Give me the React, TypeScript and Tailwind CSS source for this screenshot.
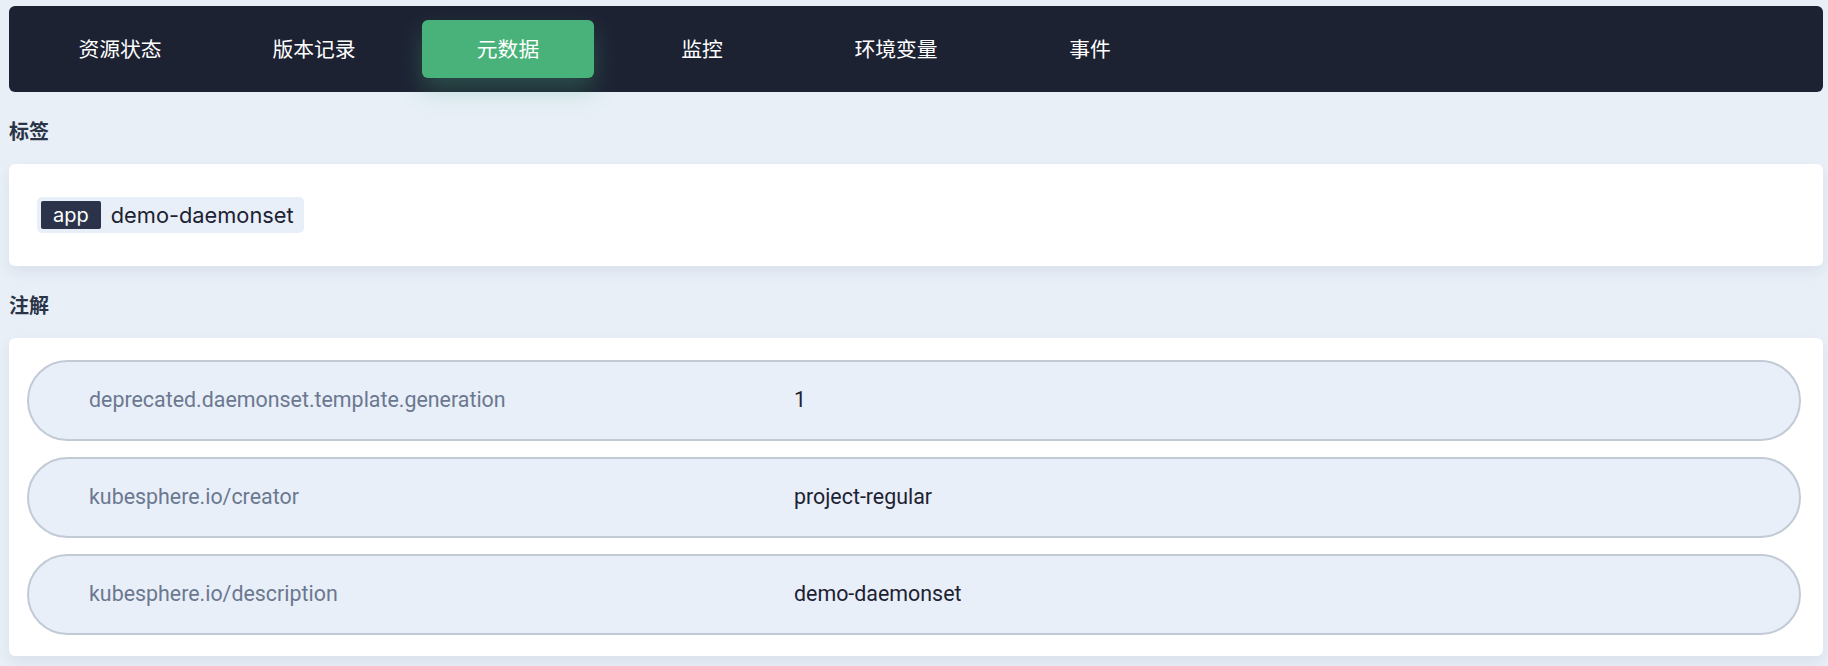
const tabs = ["资源状态", "版本记录", "元数据", "监控", "环境变量", "事件"];

const labels = [{ key: "app", value: "demo-daemonset" }];

const annotations = [
  { key: "deprecated.daemonset.template.generation", value: "1" },
  { key: "kubesphere.io/creator", value: "project-regular" },
  { key: "kubesphere.io/description", value: "demo-daemonset" },
];

const cjk = "font-['Noto_Sans_CJK_SC',sans-serif]";

function SectionTitle({ children }: { children: string }) {
  return (
    <h2
      className={`${cjk} pb-[19px] pt-[25px] text-[20px] font-semibold leading-[28px] text-[#2a3446]`}
    >
      {children}
    </h2>
  );
}

export default function App() {
  return (
    <div className="min-h-[666px] bg-[#e8eff7] pb-[7px] pl-[9px] pr-[5px] pt-[6px]">
      <nav className="flex h-[86px] items-center gap-[22px] rounded-[6px] bg-[#1d2233] pl-[25px]">
        {tabs.map((tab) => {
          const active = tab === "元数据";
          return (
            <button
              key={tab}
              className={`${cjk} flex h-[58px] w-[172px] items-center justify-center rounded-[6px] text-[20.8px] text-white ${
                active ? "bg-[#48b27a] shadow-[0_12px_24px_rgba(72,178,122,0.3)]" : ""
              }`}
            >
              {tab}
            </button>
          );
        })}
      </nav>

      <SectionTitle>标签</SectionTitle>
      <section className="flex h-[102px] items-center rounded-[6px] bg-white pl-[28px] shadow-[0_6px_14px_rgba(30,40,70,0.07)]">
        {labels.map((l) => (
          <div
            key={l.key}
            className="flex h-[36px] items-center gap-[10px] rounded-[5px] bg-[#e8eff8] p-[4px] pr-[10px] font-['Inter',sans-serif] text-[20px]"
          >
            <span className="flex h-[28px] items-center rounded-[2px] bg-[#2a3349] px-[12px] text-white">
              {l.key}
            </span>
            <span className="text-[21.8px] text-[#1d2233]">{l.value}</span>
          </div>
        ))}
      </section>

      <SectionTitle>注解</SectionTitle>
      <section className="flex flex-col gap-[16px] rounded-[6px] bg-white pb-[21px] pl-[18px] pr-[22px] pt-[22px] shadow-[0_6px_14px_rgba(30,40,70,0.07)]">
        {annotations.map((a) => (
          <div
            key={a.key}
            className="flex h-[81px] items-center rounded-full border-2 border-[#c2cad6] bg-[#e8eff8] pl-[60px] font-['Roboto',sans-serif] text-[21.4px]"
          >
            <span className="w-[705px] shrink-0 text-[#6b7890]">{a.key}</span>
            <span className="text-[#1d2233]">{a.value}</span>
          </div>
        ))}
      </section>
    </div>
  );
}
